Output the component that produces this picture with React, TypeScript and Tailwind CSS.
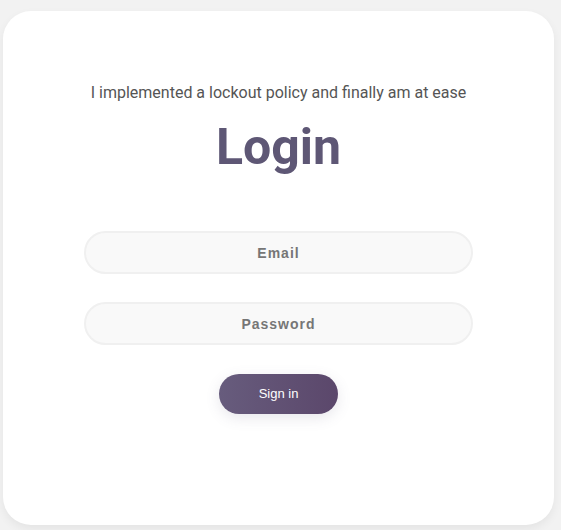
import React from 'react';

const App: React.FC = () => {
  return (
    <div className="min-h-[530px] w-[561px] bg-[#f2f2f2] pt-[11px] pl-[3px]" style={{ fontFamily: 'Roboto, sans-serif' }}>
      <div className="flex h-[514px] w-[551px] flex-col items-center rounded-[28px] bg-white shadow-[0_4px_10px_rgba(0,0,0,0.06)]">
        <p className="mt-[70px] text-[16px] leading-6 text-[#555555]">I implemented a lockout policy and finally am at ease</p>
        <h1 className="mt-[12px] text-[50px] font-bold leading-[60px] text-[#5e5775]">Login</h1>

        <form className="mt-[54px] flex flex-col items-center">
          <input
            type="text"
            placeholder="Email"
            className="h-[43px] w-[389px] rounded-full border-2 border-[#f0f0f0] bg-[#f9f9f9] text-center text-[14px] font-bold tracking-[1px] outline-none placeholder:text-[#767676]"
            style={{ fontFamily: '"Liberation Sans", Arial, sans-serif' }}
          />
          <input
            type="password"
            placeholder="Password"
            className="mt-[28px] h-[43px] w-[389px] rounded-full border-2 border-[#f0f0f0] bg-[#f9f9f9] text-center text-[14px] font-bold tracking-[1px] outline-none placeholder:text-[#767676]"
            style={{ fontFamily: '"Liberation Sans", Arial, sans-serif' }}
          />
          <button
            type="button"
            className="mt-[29px] h-[40px] w-[119px] rounded-full bg-gradient-to-r from-[#675c7d] to-[#5b476b] text-[13px] text-white shadow-[0_4px_14px_rgba(103,92,125,0.15)]"
            style={{ fontFamily: '"Liberation Sans", Arial, sans-serif' }}
          >
            Sign in
          </button>
        </form>
      </div>
    </div>
  );
};

export default App;
